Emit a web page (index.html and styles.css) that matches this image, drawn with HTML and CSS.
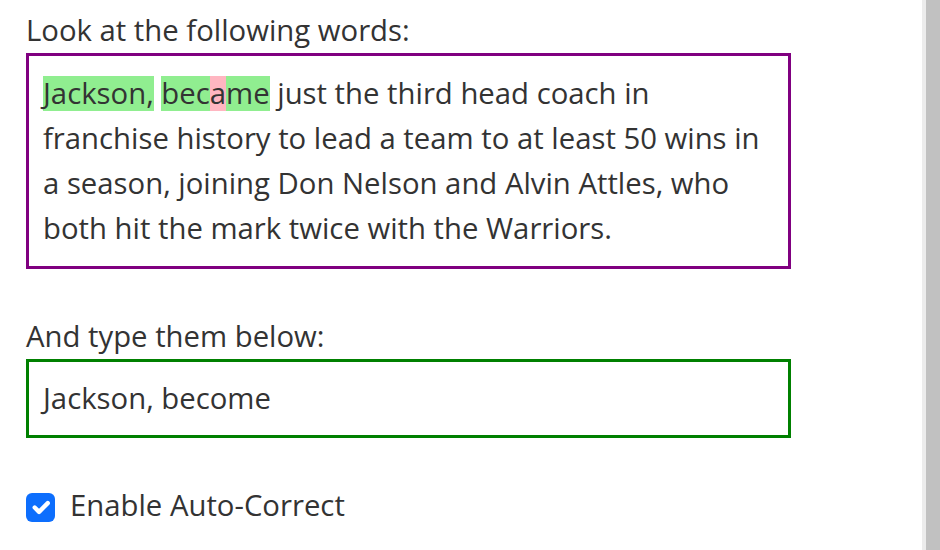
FILE: index.html
```html
<!DOCTYPE html>
<html>
<head>
<meta charset="utf-8">
<link rel="stylesheet" href="styles.css">
</head>
<body>
<div class="page">
  <main class="content">
    <div class="label">Look at the following words:</div>
    <div class="passage"><span class="hl ok">Jackson,</span> <span class="hl ok">bec</span><span class="hl bad">a</span><span class="hl ok">me</span> just the third head coach in franchise history to lead a team to at least 50 wins in a season, joining Don Nelson and Alvin Attles, who both hit the mark twice with the Warriors.</div>
    <div class="label label-gap">And type them below:</div>
    <div class="typed">Jackson, become</div>
    <label class="check-row">
      <span class="checkbox"><svg viewBox="0 0 20 20" width="29" height="29"><path d="M6 10l3 3 6-6" fill="none" stroke="#fff" stroke-width="3" stroke-linecap="round" stroke-linejoin="round"/></svg></span>
      <span class="check-text">Enable Auto-Correct</span>
    </label>
  </main>
  <div class="scroll-track"></div>
</div>
</body>
</html>
```
FILE: styles.css
```css
html, body { margin: 0; padding: 0; height: 100%; }
body {
  background: #fff;
  color: #333;
  font-family: "Open Sans", sans-serif;
  font-size: 29.3px;
  line-height: 45px;
  overflow: hidden;
}
.page { display: flex; height: 550px; }
.content { flex: 1; padding: 8px 0 0 26px; }
.label { width: 765px; }
.label-gap { margin-top: 45px; }
.passage {
  width: 765px;
  box-sizing: border-box;
  border: 3px solid #800080;
  padding: 15px 14px;
}
.hl { display: inline-block; line-height: 35px; }
.ok { background: #90ee90; }
.bad { background: #ffb6c1; }
.typed {
  width: 765px;
  box-sizing: border-box;
  border: 3px solid #008000;
  padding: 14px 14px;
}
.check-row { display: flex; align-items: flex-start; margin-top: 45px; gap: 15px; }
.checkbox {
  width: 29px; height: 29px; margin-top: 10px;
  background: #0d6efd; border-radius: 6px; display: block;
}
.checkbox svg { display: block; }
.scroll-track {
  width: 14px;
  background: #c1c1c1;
  border-left: 4px solid #ececec;
}
```
